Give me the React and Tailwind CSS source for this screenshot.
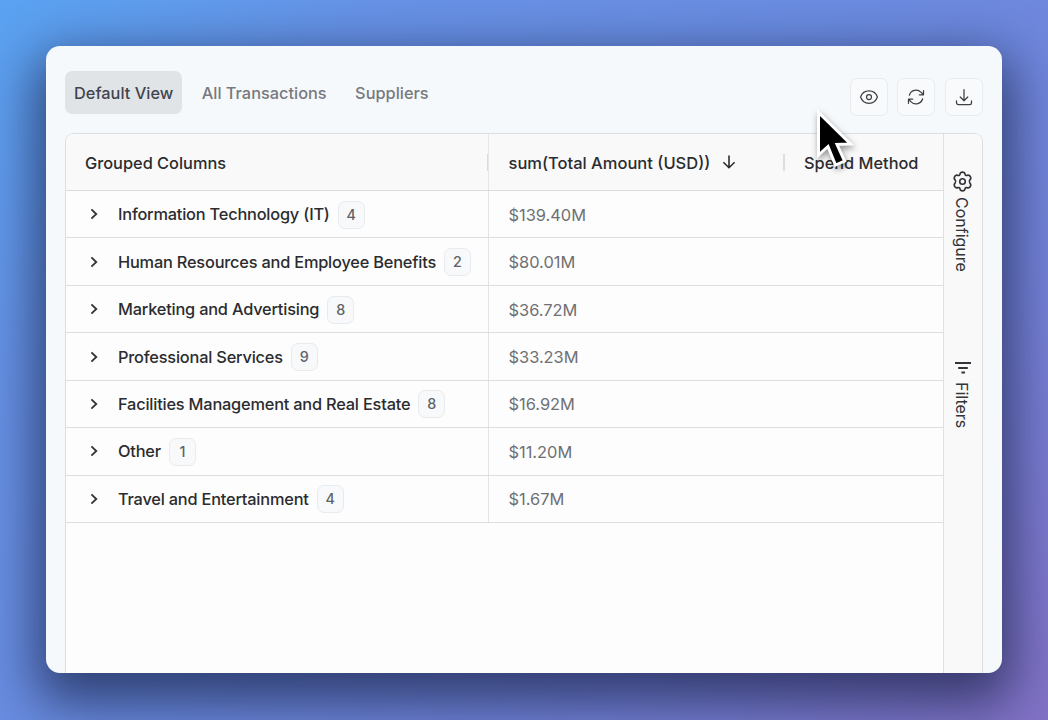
import React from "react";
import {
  HiOutlineEye,
  HiOutlineArrowPath,
  HiOutlineArrowDownTray,
} from "react-icons/hi2";

const rows = [
  ["Information Technology (IT)", 4, "$139.40M"],
  ["Human Resources and Employee Benefits", 2, "$80.01M"],
  ["Marketing and Advertising", 8, "$36.72M"],
  ["Professional Services", 9, "$33.23M"],
  ["Facilities Management and Real Estate", 8, "$16.92M"],
  ["Other", 1, "$11.20M"],
  ["Travel and Entertainment", 4, "$1.67M"],
];

function Tab({ children, active }) {
  return (
    <button
      className={
        active
          ? "h-[43px] rounded-[7px] bg-[#e1e4e7] px-[9px] pt-px text-[#40444f]"
          : "h-[43px] px-[9px] pt-px text-[#77797e]"
      }
    >
      {children}
    </button>
  );
}

function IconButton({ children }) {
  return (
    <button className="flex size-[38px] items-center justify-center rounded-[7px] border border-[#e7ebef] bg-[#f8fafb] text-[#3f4146]">
      {children}
    </button>
  );
}

function Row({ name, count, amount }) {
  return (
    <div className="flex h-[47.45px] border-b border-[#dededf]">
      <div className="flex w-[423px] items-center border-r border-[#e4e4e5] pl-[20px]">
        <svg className="size-4 shrink-0 text-[#333436]" viewBox="0 0 16 16" fill="none" stroke="currentColor" strokeWidth="1.8">
          <path d="M5.4 3.4 L10.3 8 L5.4 12.6" />
        </svg>
        <span className="ml-4 text-[16.35px] font-medium tracking-[-0.2px] text-[#2b2c2f]">{name}</span>
        <span className="ml-[8px] mt-[1px] flex h-[28px] w-[27px] items-center justify-center rounded-[7px] border border-[#e8ebee] bg-[#f7f9fb] text-[14.3px] text-[#606266]">
          {count}
        </span>
      </div>
      <div className="flex flex-1 items-center pl-[19.5px] pt-px text-[16.4px] font-normal text-[#6f7073]">{amount}</div>
    </div>
  );
}

export default function App() {
  return (
    <div className="relative h-[720px] w-[1048px] overflow-hidden bg-[linear-gradient(135deg,#5aa3f2_0%,#6792e6_22%,#6b8be0_50%,#7482d8_75%,#8372c6_100%)] pl-[46px] pt-[46px] font-['Inter',sans-serif] text-[16.35px] font-medium leading-6">
      <div className="flex h-[627px] w-[955.5px] flex-col overflow-hidden rounded-[14px] bg-[#f5f9fc] shadow-[0_20px_52px_10px_rgba(12,18,48,0.62)]">
        <div className="flex h-[87px] shrink-0 items-start justify-between pl-[19px] pr-[19px] pt-[25px]">
          <div className="flex gap-[10.4px]">
            <Tab active>Default View</Tab>
            <Tab>All Transactions</Tab>
            <Tab>Suppliers</Tab>
          </div>
          <div className="mt-[7px] flex gap-[9.5px]">
            <IconButton><HiOutlineEye className="size-5" /></IconButton>
            <IconButton><HiOutlineArrowPath className="size-5" /></IconButton>
            <IconButton><HiOutlineArrowDownTray className="size-5" /></IconButton>
          </div>
        </div>

        <div className="ml-[19px] mr-[19px] flex flex-1 rounded-t-[9px] border border-b-0 border-[#dcdfe2] bg-[#fdfdfd]">
          <div className="flex w-[877px] flex-col">
            <div className="flex h-[57px] shrink-0 rounded-tl-[8px] border-b border-[#dcdcdd] bg-[#f9f9f9] text-[#2b2c2f]">
              <div className="flex w-[423px] items-center justify-between border-r border-[#e6e6e7] pl-[19px]">
                <span className="pt-px">Grouped Columns</span>
                <span className="h-[17px] w-px bg-[#dcdcdd]" />
              </div>
              <div className="flex w-[296px] items-center pl-[19.5px]">
                <span className="pt-px text-[16.5px]">sum(Total Amount (USD))</span>
                <svg className="ml-[11px] size-4" viewBox="0 0 16 16" fill="none" stroke="currentColor" strokeWidth="1.6">
                  <path d="M8 1.5v12 M2.4 8.2 L8 13.7 L13.6 8.2" />
                </svg>
                <span className="ml-auto h-[17px] w-[2px] bg-[#dededf]" />
              </div>
              <span className="flex items-center pl-[19px] pt-px">Spend Method</span>
            </div>
            {rows.map(([name, count, amount]) => (
              <Row key={name} name={name} count={count} amount={amount} />
            ))}
          </div>
          <div className="flex flex-1 flex-col items-center rounded-tr-[8px] border-l border-[#e1e1e2] bg-[#f9f9f9] pt-[36px] text-[#343538]">
            <svg className="size-[23px] shrink-0" viewBox="0 0 24 24" fill="none" stroke="currentColor" strokeWidth="1.7" strokeLinejoin="round">
              <circle cx="12" cy="12" r="2.9" />
              <path d="M9.4 4.3 Q9.7 2.2 12 2.2 Q14.3 2.2 14.6 4.3 Q14.9 6.1 16.6 5.6 Q18.9 4.7 20.2 6.8 Q21.3 8.9 19.7 10.3 Q18.3 12 19.7 13.7 Q21.3 15.1 20.2 17.2 Q18.9 19.3 16.6 18.4 Q14.9 17.9 14.6 19.7 Q14.3 21.8 12 21.8 Q9.7 21.8 9.4 19.7 Q9.1 17.9 7.4 18.4 Q5.1 19.3 3.8 17.2 Q2.7 15.1 4.3 13.7 Q5.7 12 4.3 10.3 Q2.7 8.9 3.8 6.8 Q5.1 4.7 7.4 5.6 Q9.1 6.1 9.4 4.3 Z" />
            </svg>
            <span className="mr-[2px] mt-[4px] text-[16px] font-normal [writing-mode:vertical-rl]">Configure</span>
            <svg className="mt-[89px] h-[14px] w-[16px] shrink-0" viewBox="0 0 16 14" stroke="currentColor" strokeWidth="1.8">
              <path d="M0 2h16 M3.2 7h9.6 M6.4 11.5h3.6" />
            </svg>
            <span className="mr-[2px] mt-[7px] text-[16px] font-normal [writing-mode:vertical-rl]">Filters</span>
          </div>
        </div>
      </div>

      <svg
        className="absolute left-[810px] top-[104px] h-[72px] w-[52px] drop-shadow-[1px_3px_3px_rgba(0,0,0,0.4)]"
        viewBox="0 0 52 72"
      >
        <path
          d="M8.5 8.5 V51 L18 42.5 L25.5 61 L34.5 57 L27 40.5 L40.5 40 Z"
          fill="#000"
          stroke="#fff"
          strokeWidth="3"
        />
      </svg>
    </div>
  );
}
